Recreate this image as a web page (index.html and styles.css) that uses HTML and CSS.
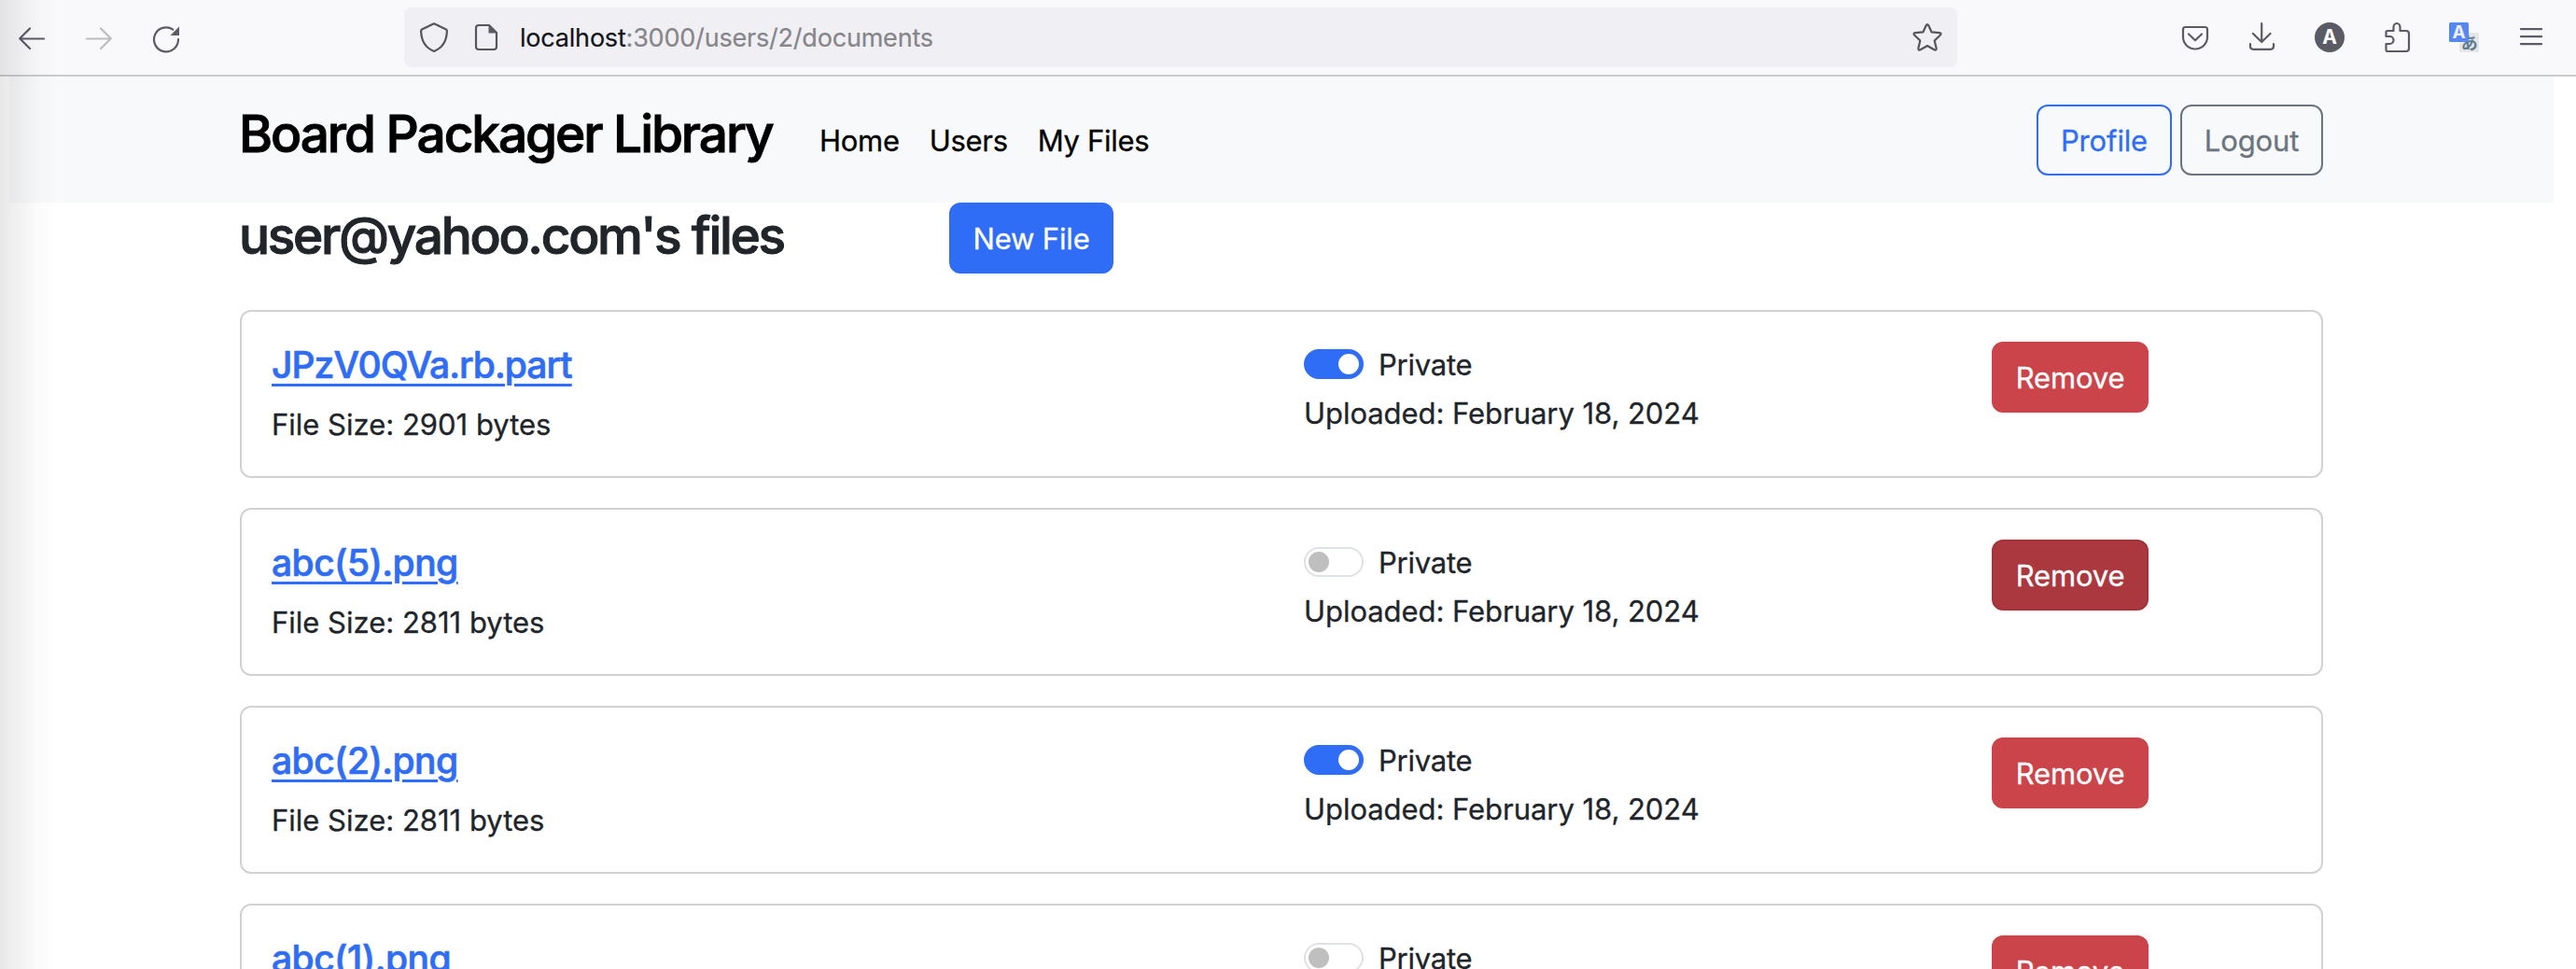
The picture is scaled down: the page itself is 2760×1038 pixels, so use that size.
FILE: index.html
```html
<!DOCTYPE html>
<html lang="en">
<head>
<meta charset="utf-8">
<title>Board Packager Library</title>
<link rel="stylesheet" href="styles.css">
</head>
<body>
<div class="toolbar">
  <div class="tools">
    <svg class="icon" viewBox="0 0 32 32"><path d="M29 17.5H3.5M14 6.5L3.2 17.3L14 28"/></svg>
    <svg class="icon faded" viewBox="0 0 32 32"><path d="M3 17.5H28.5M18 6.5L28.8 17.3L18 28"/></svg>
    <svg class="icon" viewBox="0 0 32 32"><path d="M23.3 7.6A13 13 0 1 0 29 18"/><path class="solid" d="M30 4.5V14H20.500Z"/></svg>
  </div>
  <div class="urlbar">
    <svg class="icon dark" viewBox="0 0 32 32"><path d="M16 1.300L29 7.500Q30 8 29.900 9.500C29.500 19 26 27 16 30.900C6 27 2.500 19 2.100 9.500Q2 8 3 7.500Z"/></svg>
    <svg class="icon dark" viewBox="0 0 32 32"><path d="M19 3H8Q5 3 5 6V26Q5 29 8 29H24Q27 29 27 26V11Z"/><path class="solid" d="M18.500 2.500V11.500H27.500Z"/></svg>
    <div class="url">localhost<span class="path">:3000/users/2/documents</span></div>
    <svg class="icon dark" viewBox="0 0 32 32"><path d="M14.700 3.300Q16 .9 17.300 3.300L20.500 10.300L28.800 11.100Q31.800 11.600 29.700 13.700L23.700 19.500L25.600 27.400Q26 30.600 23.400 29.300L16 25L8.600 29.300Q6 30.600 6.400 27.400L8.300 19.500L2.300 13.700Q.2 11.600 3.200 11.100L11.500 10.300Z"/></svg>
  </div>
  <div class="tools">
    <svg class="icon" viewBox="0 0 32 32"><path d="M5.500 5H26.500Q29 5 29 7.500V15.500A13 13 0 0 1 3 15.500V7.500Q3 5 5.500 5ZM9 12.500L16 19.200L23 12.500"/></svg>
    <svg class="icon" viewBox="0 0 32 32"><path d="M15.200 1V20.500M6 12L15.200 21L24.500 12M3 23V25.500Q3 28.800 6.300 28.800H24.700Q28 28.800 28 25.500V23"/></svg>
    <svg class="icon" viewBox="0 0 32 32"><circle class="badge" cx="16" cy="16" r="16"/><text class="badge-letter" x="16" y="23.300">A</text></svg>
    <svg class="icon" viewBox="0 0 32 32"><path d="M6 9H12.500V5A3.500 4 0 0 1 19.500 5V9H26Q29 9 29 12V28Q29 31 26 31H6.500Q4.500 31 4.500 29V23H8.500A4 4 0 0 0 8.500 15H4.500V10.500Q4.500 9 6 9Z"/></svg>
    <svg class="icon" viewBox="0 0 32 32"><rect class="tr-back" x="11" y="11" width="21" height="21" rx="1.500"/><text class="tr-kana" x="21.800" y="29">あ</text><rect class="tr-front" width="21" height="21" rx="1.500"/><text class="tr-letter" x="10.500" y="17">A</text></svg>
    <svg class="icon" viewBox="0 0 32 32"><path d="M5 7.200H27M5 15.200H27M5 23.200H27"/></svg>
  </div>
</div>
<nav class="navbar">
  <a class="brand">Board Packager Library</a>
  <div class="links"><a>Home</a><a>Users</a><a>My Files</a></div>
  <div class="actions"><a class="btn profile">Profile</a><a class="btn logout">Logout</a></div>
</nav>
<main>
  <header class="heading">
    <h1>user@yahoo.com's files</h1>
    <a class="btn new">New File</a>
  </header>
  <section class="card">
    <div class="file"><a class="name long">JPzV0QVa.rb.part</a><p>File Size: 2901 bytes</p></div>
    <div class="meta"><label><span class="switch on"></span>Private</label><p>Uploaded: February 18, 2024</p></div>
    <a class="btn remove">Remove</a>
  </section>
  <section class="card">
    <div class="file"><a class="name">abc(5).png</a><p>File Size: 2811 bytes</p></div>
    <div class="meta"><label><span class="switch"></span>Private</label><p>Uploaded: February 18, 2024</p></div>
    <a class="btn remove active">Remove</a>
  </section>
  <section class="card">
    <div class="file"><a class="name">abc(2).png</a><p>File Size: 2811 bytes</p></div>
    <div class="meta"><label><span class="switch on"></span>Private</label><p>Uploaded: February 18, 2024</p></div>
    <a class="btn remove">Remove</a>
  </section>
  <section class="card">
    <div class="file"><a class="name">abc(1).png</a></div>
    <div class="meta"><label><span class="switch"></span>Private</label></div>
    <a class="btn remove">Remove</a>
  </section>
</main>
<div class="edge-shadow"></div>
</body>
</html>
```
FILE: styles.css
```css
* { box-sizing: border-box; }
html, body { height: 100%; overflow: hidden; }
body {
  margin: 0;
  background: #fff;
  color: #212529;
  font: 400 31px/48px Inter, "Liberation Sans", sans-serif;
  letter-spacing: -0.15px;
  -webkit-text-stroke: 0.3px;
}
p, h1 { margin: 0; }

.toolbar {
  display: flex;
  align-items: center;
  justify-content: space-between;
  height: 82px;
  padding: 0 32px 0 18px;
  background: #f9f9fb;
  border-bottom: 2px solid #cccccc;
  -webkit-text-stroke: 0;
}
.tools { display: flex; gap: 40px; }
.icon {
  flex: none;
  width: 32px;
  height: 32px;
  overflow: visible;
  fill: none;
  stroke: #5b5b66;
  stroke-width: 2.2;
  stroke-linecap: round;
  stroke-linejoin: round;
}
.icon.dark { stroke: #55555a; }
.icon.faded { stroke: #bdbdc1; }
.solid { fill: #5b5b66; stroke: none; }
.badge { fill: #5b5b66; stroke: none; }
.badge-letter { fill: #fff; stroke: none; font: 700 21px Inter, sans-serif; letter-spacing: 0; text-anchor: middle; }
.tr-back { fill: #e6e6e8; stroke: none; }
.tr-front { fill: #5688ef; stroke: none; }
.tr-letter { fill: #eef1f8; stroke: none; font: 700 19px Inter, sans-serif; letter-spacing: 0; text-anchor: middle; }
.tr-kana { fill: #607d8b; stroke: none; font: 700 18px "Noto Sans CJK JP", sans-serif; letter-spacing: 0; text-anchor: middle; }

.urlbar {
  display: flex;
  align-items: center;
  gap: 24px;
  width: 1664px;
  height: 64px;
  padding: 0 16px;
  border-radius: 8px;
  background: #f0f0f4;
}
.url { flex: 1; margin-left: -4px; padding-top: 2px; color: #15141a; font-size: 27px; letter-spacing: -0.2px; line-height: 64px; -webkit-text-stroke: 0.2px; }
.path { color: #85858a; }

.navbar {
  display: flex;
  align-items: flex-start;
  height: 135px;
  margin: 0 24px 0 10px;
  padding: 30px 247px 0;
  background: #f8f9fb;
  color: #000;
}
.brand, h1 { font-size: 55px; font-weight: 500; white-space: nowrap; text-indent: -1px; -webkit-text-stroke: 1px; }
.brand { width: 621px; letter-spacing: -2.08px; line-height: 62px; }
.links { display: flex; gap: 32px; line-height: 77px; letter-spacing: -0.3px; }
.actions { display: flex; gap: 9px; margin-left: auto; }

.btn { display: block; height: 76px; border: 2px solid; border-radius: 12px; line-height: 73px; text-align: center; }
.profile { width: 145px; color: #2f6df6; }
.logout { width: 153px; color: #6c757d; }
.new { width: 176px; color: #fff; background: #2f6df6; border-color: #2f6df6; }
.remove { width: 168px; color: #fff; background: #ca444a; border-color: #ca444a; }
.remove.active { background: #aa383e; border-color: #a0353b; }

main { width: 2232px; margin-left: 257px; }
.heading { display: flex; margin-bottom: 39px; }
h1 { width: 760px; letter-spacing: -2.3px; line-height: 70px; }

.card {
  display: grid;
  grid-template-columns: 1106px 737px auto;
  justify-content: start;
  height: 180px;
  margin-bottom: 32px;
  padding: 32px;
  border: 2px solid #d2d2d2;
  border-radius: 12px;
}
.name {
  display: block;
  color: #2f6df6;
  font-size: 39px;
  font-weight: 500;
  letter-spacing: -0.55px;
  line-height: 49px;
  text-decoration: underline;
  text-decoration-thickness: 3px;
  text-underline-offset: 6px;
  -webkit-text-stroke: 0.7px;
}
.name.long { letter-spacing: -0.95px; }
.file p { margin-top: 16px; letter-spacing: 0; }
.meta label { display: flex; align-items: center; gap: 16px; line-height: 49px; letter-spacing: -0.25px; }
.meta p { margin-top: 4px; letter-spacing: -0.05px; }
.switch {
  display: flex;
  align-items: center;
  width: 64px;
  height: 32px;
  margin-bottom: 1px;
  padding: 0 3px;
  border: 2px solid #dee2e6;
  border-radius: 16px;
}
.switch::before { content: ""; width: 22px; height: 22px; border-radius: 50%; background: #bfbfbf; }
.switch.on { justify-content: flex-end; background: #2f6df6; border-color: #2f6df6; }
.switch.on::before { background: #fff; }

.edge-shadow {
  position: absolute;
  inset: 0 auto 0 0;
  width: 62px;
  background: linear-gradient(90deg, rgba(0, 0, 0, .09), rgba(0, 0, 0, .055) 30%, rgba(0, 0, 0, .015) 65%, transparent);
  pointer-events: none;
}
```
